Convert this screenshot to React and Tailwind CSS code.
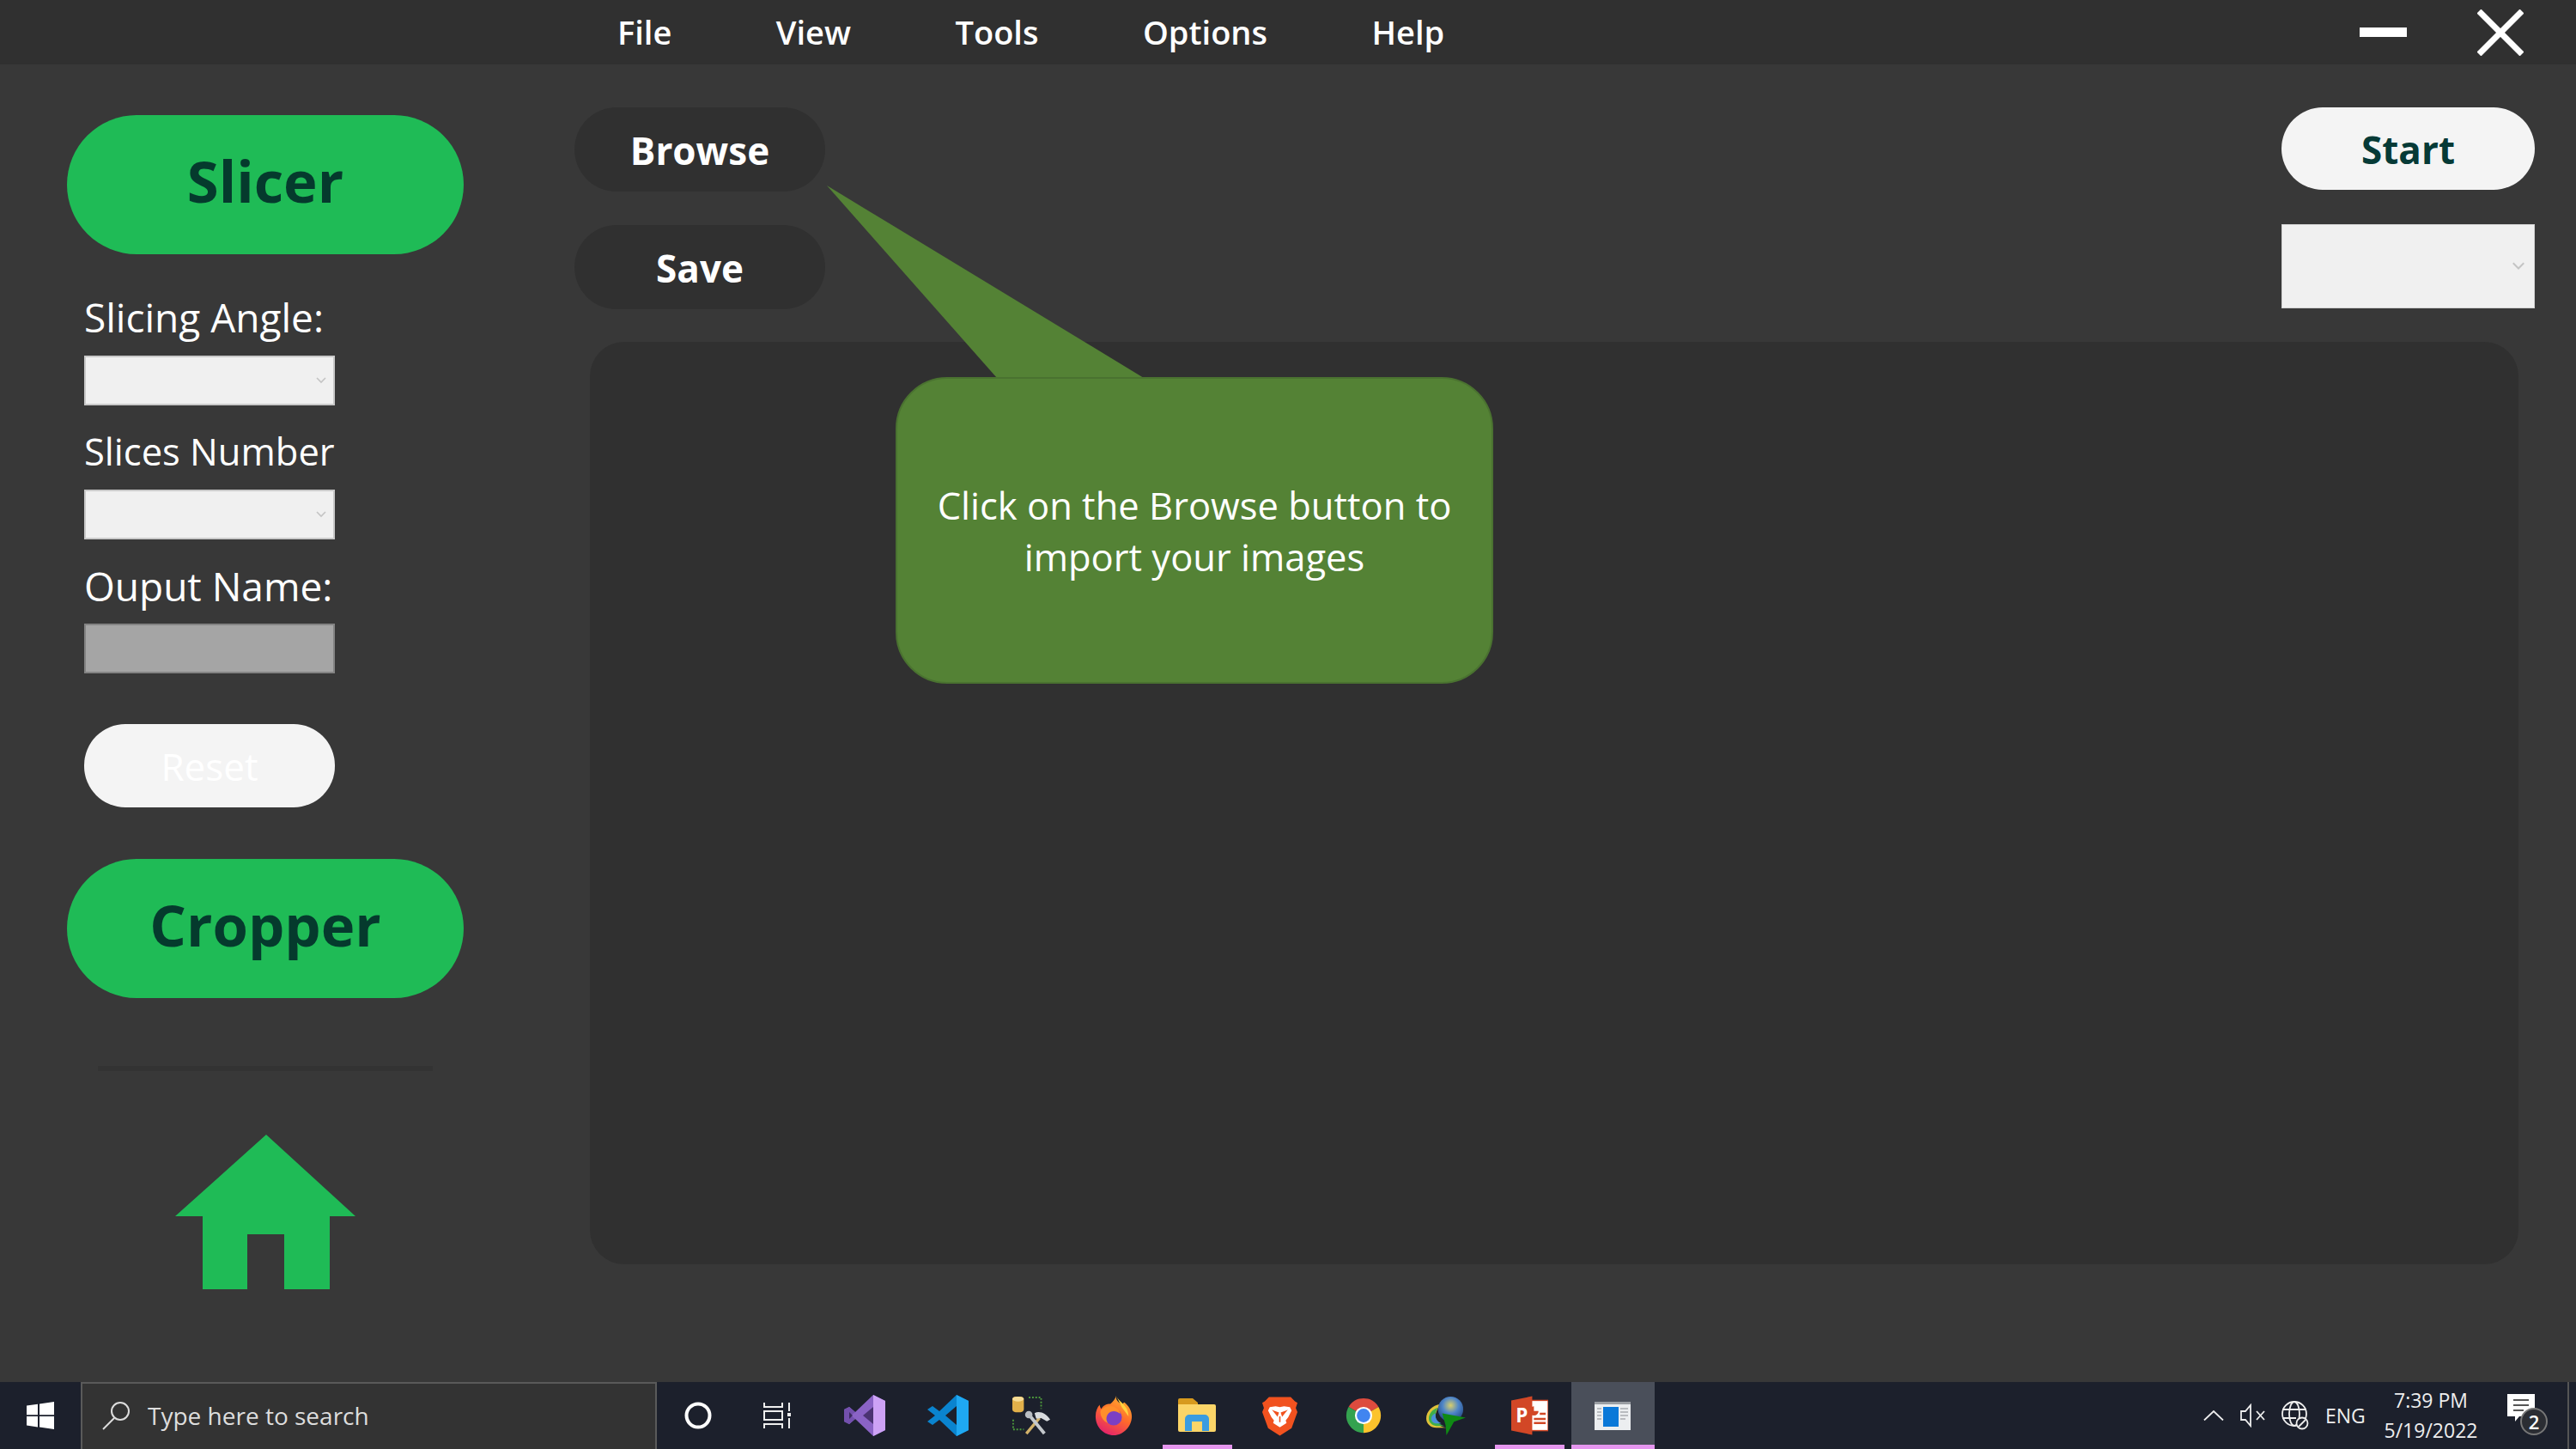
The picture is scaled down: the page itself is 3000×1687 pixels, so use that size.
import React from 'react';

const segoe = { fontFamily: '"Open Sans", "Noto Sans", sans-serif' };

const GreenButton = ({ children, className }) => (
	<div className={`flex items-center justify-center w-[462px] h-[162px] pb-[10px] rounded-[81px] bg-[#1fbb56] text-[#053a2d] text-[67px] font-bold ${className}`}>
		{children}
	</div>
);

const DarkButton = ({ children }) => (
	<div className="flex items-center justify-center w-[292px] h-[98px] pt-[2px] rounded-[49px] bg-[#303030] text-white text-[44px] font-bold">
		{children}
	</div>
);

const Chevron = ({ className }) => (
	<svg viewBox="0 0 12 8" className={`w-[12px] h-[8px] ${className}`} fill="none" stroke="#c4c4c4" strokeWidth="1.6">
		<path d="M1 1l5 5 5-5" />
	</svg>
);

const SelectBox = () => (
	<div className="flex items-center justify-end w-[292px] h-[58px] pr-[8px] bg-[#f0f0f0] border-2 border-[#c9c9c9]">
		<Chevron />
	</div>
);

const Label = ({ children, className }) => (
	<div className={`w-[292px] h-[60px] whitespace-nowrap text-white leading-[60px] ${className}`}>{children}</div>
);

const Sidebar = () => (
	<div className="flex flex-col w-[687px] shrink-0 pt-[59px] pl-[78px]">
		<GreenButton>Slicer</GreenButton>
		<div className="flex flex-col pl-[20px]">
			<Label className="mt-[43px] mb-[15px] text-[46px]">Slicing Angle:</Label>
			<SelectBox />
			<Label className="mt-[24px] mb-[14px] text-[43.5px]">Slices Number</Label>
			<SelectBox />
			<Label className="mt-[24px] mb-[14px] text-[46px]">Ouput Name:</Label>
			<div className="w-[292px] h-[58px] bg-[#a5a5a5] border-2 border-[#838383]" />
			<div className="flex items-center justify-center w-[292px] h-[97px] mt-[59px] rounded-[48px] bg-[#f4f4f4] text-white text-[44px]">
				Reset
			</div>
		</div>
		<GreenButton className="mt-[60px]">Cropper</GreenButton>
		<div className="w-[390px] h-[6px] mt-[79px] ml-[36px] bg-[#333333]" />
		<svg viewBox="0 0 210 180" className="w-[210px] h-[180px] mt-[74px] ml-[126px]">
			<path d="M106 0L210 95H180V180H127V116H84V180H32V95H0Z" fill="#1fbb56" />
		</svg>
	</div>
);

const MainArea = () => (
	<div className="relative flex flex-col flex-1 pt-[50px] pr-[46px]">
		<div className="flex justify-between -ml-[18px] mr-[2px]">
			<div className="flex flex-col gap-[39px]">
				<DarkButton>Browse</DarkButton>
				<DarkButton>Save</DarkButton>
			</div>
			<div className="flex flex-col gap-[40px]">
				<div className="flex items-center justify-center w-[295px] h-[96px] pt-[2px] rounded-[48px] bg-[#f4f4f4] text-[#063a36] text-[44px] font-bold">
					Start
				</div>
				<div className="flex items-center justify-end w-[295px] h-[98px] pr-[12px] bg-[#f0f0f0] border border-[#d4d4d4]">
					<Chevron className="scale-125" />
				</div>
			</div>
		</div>
		<div className="w-[2246px] h-[1074px] mt-[38px] rounded-[40px] bg-[#303030]" />
		{/* Callout over the panel */}
		<div className="absolute left-[276px] top-[141px] w-[776px] h-[581px]">
			<svg viewBox="0 0 776 581" className="absolute inset-0 w-full h-full">
				<path d="M0 0L369 224H198Z" fill="#548235" />
			</svg>
			<div className="absolute left-[80px] top-[223px] flex items-center justify-center w-[696px] h-[357px] pt-[2px] rounded-[60px] bg-[#548235] border-2 border-[#4a7230] text-white text-[43.5px] leading-[60px] text-center">
				<div>
					Click on the Browse button to
					<br />
					import your images
				</div>
			</div>
		</div>
	</div>
);

/* Taskbar app icons */
const VisualStudioIcon = () => (
	<svg viewBox="0 0 48 48" className="w-[48px] h-[48px]">
		<path d="M34 0L48 7V41L34 48L13 28L6 34L0 31V17L6 14L13 20Z" fill="#8a63c5" />
		<path d="M0 17L6 14L13 20L8 24L13 28L6 34L0 31Z" fill="#7350ad" />
		<path d="M34 0L48 7V41L34 48Z" fill="#cda2f5" />
		<path d="M34 14L22 24L34 34Z" fill="#4a3372" />
		<path d="M6 20V28L10 24Z" fill="#3a2a5e" />
	</svg>
);

const VSCodeIcon = () => (
	<svg viewBox="0 0 48 48" className="w-[48px] h-[48px]">
		<path d="M34 0L48 7V41L34 48L14 29L6 35L0 31L9 24L0 17L6 13L14 19Z" fill="#0a84cf" />
		<path d="M34 0L48 7V41L34 48Z" fill="#1fa8f2" />
		<path d="M34 13L21 24L34 35Z" fill="#1c202c" />
	</svg>
);

const DbToolIcon = () => (
	<svg viewBox="0 0 48 48" className="w-[46px] h-[48px]">
		<rect x="1" y="1" width="14" height="19" rx="4" fill="#e2b04a" />
		<ellipse cx="8" cy="4" rx="7" ry="3" fill="#f6dc96" />
		<path d="M21 2h15v14M2 29v12h13" fill="none" stroke="#4d9a3c" strokeWidth="2" strokeDasharray="2 2" />
		<path d="M18 46l16-19" stroke="#d3b26a" strokeWidth="3.5" />
		<path d="M22 24l18 22" stroke="#c4c8cc" strokeWidth="4" />
		<path d="M28 21c6-3 14 0 19 8l-4 2-7-4-6 1z" fill="#d8dbde" />
		<circle cx="21" cy="23" r="4.5" fill="#b9bdc2" />
	</svg>
);

const FirefoxIcon = () => (
	<svg viewBox="0 0 48 48" className="w-[46px] h-[48px]">
		<defs>
			<linearGradient id="foxBody" x1="0.8" y1="0" x2="0.3" y2="1">
				<stop offset="0" stopColor="#ffb52e" />
				<stop offset="0.5" stopColor="#ff6a2b" />
				<stop offset="1" stopColor="#e3216d" />
			</linearGradient>
		</defs>
		<path d="M27 0c-1 5 3 8 7 11 2-3 3-3 3-3 5 4 9 10 9 17 0 12-10 23-22 23S2 38 2 25c0-6 2-11 5-14 0 2 1 4 2 5 2-4 6-6 11-6 3-3 6-6 7-10z" fill="url(#foxBody)" />
		<path d="M27 0c2 5 9 9 13 16 1 3 2 6 2 9L34 14z" fill="#ffd23f" />
		<circle cx="24" cy="26" r="10" fill="#7b3fc4" />
		<path d="M8 18c5-6 14-7 19-3 5 3 5 7 5 7-5-4-10-4-14-1-3 3-4 8-1 12-6-2-10-9-9-15z" fill="#ff8f2b" />
	</svg>
);

const ExplorerIcon = () => (
	<svg viewBox="0 0 44 40" className="w-[44px] h-[40px]">
		<path d="M0 2a2 2 0 012-2h15l6 5v6H0z" fill="#d79a1e" />
		<path d="M0 7h42a2 2 0 012 2v28a2 2 0 01-2 2H2a2 2 0 01-2-2z" fill="#fbd568" />
		<path d="M8 38V24a5 5 0 015-5h18a5 5 0 015 5v14h-8V27H16v11z" fill="#3a9ce0" />
	</svg>
);

const BraveIcon = () => (
	<svg viewBox="0 0 42 48" className="w-[41px] h-[48px]">
		<path d="M8 2h26l5 5 3 2-2 6 2 5-7 19-14 9-14-9-7-19 2-5-2-6 3-2z" fill="#f1521f" />
		<path d="M9 14l7-1 5 1 5-1 7 1 2 4-4 8-3 4 1 3-8 5-8-5 1-3-3-4-4-8z" fill="#fff" />
		<path d="M14 19l5 2-1 3zM28 19l-5 2 1 3zM21 25v7" stroke="#f1521f" strokeWidth="1.6" fill="#f1521f" />
	</svg>
);

const ChromeIcon = () => (
	<svg viewBox="0 0 48 48" className="w-[44px] h-[44px]">
		<path d="M24 24L5 13A22 22 0 0143 13z" fill="#dd4b3e" />
		<path d="M24 24L43 13A22 22 0 0124 46z" fill="#fcc32c" />
		<path d="M24 24L24 46A22 22 0 015 13z" fill="#34a24f" />
		<circle cx="24" cy="24" r="11" fill="#fff" />
		<circle cx="24" cy="24" r="8.6" fill="#4185f0" />
	</svg>
);

const IdmIcon = () => (
	<svg viewBox="0 0 48 46" className="w-[47px] h-[45px]">
		<defs>
			<radialGradient id="idmGlobe" cx="0.5" cy="0.35" r="0.7">
				<stop offset="0" stopColor="#d9cf6a" />
				<stop offset="0.45" stopColor="#4f86c9" />
				<stop offset="1" stopColor="#1d3f78" />
			</radialGradient>
		</defs>
		<path d="M17 9C7 10 0 18 0 26c0 6 5 11 12 11h12c-8-1-14-5-13-13 0-5 3-11 6-15z" fill="#e0c23a" />
		<path d="M14 13C7 15 3 21 3 26c0 5 4 8 9 9h10c-7-2-11-6-11-12 0-4 1-7 3-10z" fill="#3fae4a" />
		<path d="M11 20c-3 1-5 4-5 6 0 4 3 6 7 6h5c-5-2-8-7-7-12z" fill="#4a90d9" />
		<circle cx="29" cy="15" r="15" fill="url(#idmGlobe)" />
		<path d="M19 20l28 5-14 5-9 16-1-12z" fill="#0f8a14" />
	</svg>
);

const PowerPointIcon = () => (
	<svg viewBox="0 0 44 46" className="w-[43px] h-[46px]">
		<rect x="22" y="5" width="22" height="36" fill="#fff" stroke="#d24726" strokeWidth="1.5" />
		<path d="M27 12a5.5 5.5 0 105.5 5.5H27z" fill="#d24726" />
		<path d="M34 21h7M27 27h14M27 32h14" stroke="#d24726" strokeWidth="2.5" />
		<path d="M0 5L25 0v46L0 41z" fill="#d24726" />
		<text x="12.5" y="31" fontSize="23" fontWeight="700" fill="#fff" textAnchor="middle" fontFamily="Open Sans, sans-serif">
			P
		</text>
	</svg>
);

const WindowIcon = () => (
	<svg viewBox="0 0 42 33" className="w-[42px] h-[33px]">
		<rect width="42" height="33" fill="#eceef0" />
		<rect width="42" height="3" fill="#9a9ea3" />
		<rect x="10" y="6" width="18" height="23" fill="#0a78d8" />
		<path d="M3 8h5M3 12h5M3 16h5M3 20h5M30 8h9M30 12h9M30 16h9M30 20h6" stroke="#a8acb0" strokeWidth="1.5" />
	</svg>
);

const apps = [
	{ icon: <VisualStudioIcon /> },
	{ icon: <VSCodeIcon /> },
	{ icon: <DbToolIcon /> },
	{ icon: <FirefoxIcon /> },
	{ icon: <ExplorerIcon />, running: true },
	{ icon: <BraveIcon /> },
	{ icon: <ChromeIcon /> },
	{ icon: <IdmIcon /> },
	{ icon: <PowerPointIcon />, running: true },
];

const TaskCell = ({ children, running, active }) => (
	<div className={`relative flex items-center justify-center w-[96.8px] ${active ? 'bg-[#4a4f5a]' : ''}`}>
		{children}
		{running && <div className="absolute bottom-0 left-[8px] right-[8px] h-[5px] bg-[#e596ef]" />}
		{active && <div className="absolute bottom-0 left-0 right-0 h-[5px] bg-[#e596ef]" />}
	</div>
);

const Tray = () => (
	<div className="flex items-center justify-end flex-1 text-[#eeeeee]">
		<svg viewBox="0 0 24 12" className="w-[24px] h-[12px] mr-[19px]" fill="none" stroke="#eee" strokeWidth="1.8">
			<path d="M1 11.5L12 1l11 10.5" />
		</svg>
		<svg viewBox="0 0 29 28" className="w-[29px] h-[28px] mr-[19px]" fill="none" stroke="#eee" strokeWidth="1.8">
			<path d="M1 9h5l6-7v24l-6-7H1zM19 9l9 10M28 9l-9 10" />
		</svg>
		<svg viewBox="0 0 32 34" className="w-[32px] h-[34px] mr-[19px]" fill="none" stroke="#eee" strokeWidth="1.8">
			<circle cx="15" cy="15" r="14" />
			<ellipse cx="15" cy="15" rx="6" ry="14" />
			<path d="M1 10h28M1 20h16" />
			<circle cx="24" cy="26" r="6.5" fill="#1c202c" />
			<path d="M20 30l8-8" />
		</svg>
		<span className="w-[44px] text-[23px] whitespace-nowrap">ENG</span>
		<div className="flex flex-col items-center w-[130px] ml-[14px] text-[23px] leading-[35px]">
			<span className="whitespace-nowrap">7:39 PM</span>
			<span className="whitespace-nowrap">5/19/2022</span>
		</div>
		<div className="relative w-[48px] h-[50px] ml-[24px]">
			<svg viewBox="0 0 32 32" className="absolute left-0 top-0 w-[32px] h-[32px]">
				<path d="M0 0h32v26H14l-5 6v-6H0z" fill="#fff" />
				<path d="M7 7h18M7 13h18M7 19h12" stroke="#555" strokeWidth="2" />
			</svg>
			<div className="absolute left-[15px] top-[16px] flex items-center justify-center w-[32px] h-[32px] rounded-full bg-[#2b2d33] border-2 border-[#777] text-white text-[22px] font-semibold">
				2
			</div>
		</div>
		<div className="self-stretch w-[2px] ml-[22px] mr-[8px] bg-[#555]" />
	</div>
);

const Taskbar = () => (
	<div className="flex items-stretch h-[78px] bg-[#1c202c]">
		<div className="flex items-center justify-center w-[94px] shrink-0">
			<svg viewBox="0 0 32 32" className="w-[32px] h-[32px]" fill="#fff">
				<path d="M0 4.5l13-1.8v12.5H0zM15 2.4L32 0v15.2H15zM0 17h13v12.4L0 27.5zM15 17h17v15l-17-2.4z" />
			</svg>
		</div>
		<div className="flex items-center w-[671px] shrink-0 pl-[22px] pb-[2px] bg-[#333333] border-2 border-b-0 border-[#5a5a5a]">
			<svg viewBox="0 0 34 34" className="w-[34px] h-[34px] mr-[20px]" fill="none" stroke="#ddd" strokeWidth="2">
				<circle cx="22" cy="12" r="10" />
				<path d="M15 20L2 33" />
			</svg>
			<span className="text-[28px] text-[#dddddd]">Type here to search</span>
		</div>
		<TaskCell>
			<svg viewBox="0 0 32 32" className="w-[32px] h-[32px]" fill="none" stroke="#fff" strokeWidth="4">
				<circle cx="16" cy="16" r="13.5" />
			</svg>
		</TaskCell>
		<TaskCell>
			<svg viewBox="0 0 32 30" className="w-[32px] h-[30px] -ml-[10px]" fill="none" stroke="#eee" strokeWidth="2">
				<path d="M1 0v5h21V0M1 10h21v10H1zM1 30v-5h21v5M30 0v10M30 18v12" />
				<rect x="28" y="12" width="4" height="4" fill="#eee" stroke="none" />
			</svg>
		</TaskCell>
		{apps.map((app, index) => (
			<TaskCell key={index} running={app.running}>
				{app.icon}
			</TaskCell>
		))}
		<TaskCell active>
			<WindowIcon />
		</TaskCell>
		<Tray />
	</div>
);

export default function App() {
	return (
		<div className="flex flex-col w-[3000px] h-[1687px] overflow-hidden bg-[#383838]" style={segoe}>
			<div className="flex items-center h-[75px] pl-[719px] pr-[61px] bg-[#303030] text-white text-[38px] font-semibold">
				<div className="flex items-center gap-[121.5px]">
					<span>File</span>
					<span>View</span>
					<span>Tools</span>
					<span>Options</span>
					<span>Help</span>
				</div>
				<div className="flex items-center gap-[82px] ml-auto">
					<div className="w-[55px] h-[11px] bg-white" />
					<svg viewBox="0 0 54 54" className="w-[54px] h-[54px]" fill="none" stroke="#fff" strokeWidth="7">
						<path d="M2 2l50 50M52 2L2 52" />
					</svg>
				</div>
			</div>
			<div className="flex flex-1">
				<Sidebar />
				<MainArea />
			</div>
			<Taskbar />
		</div>
	);
}
